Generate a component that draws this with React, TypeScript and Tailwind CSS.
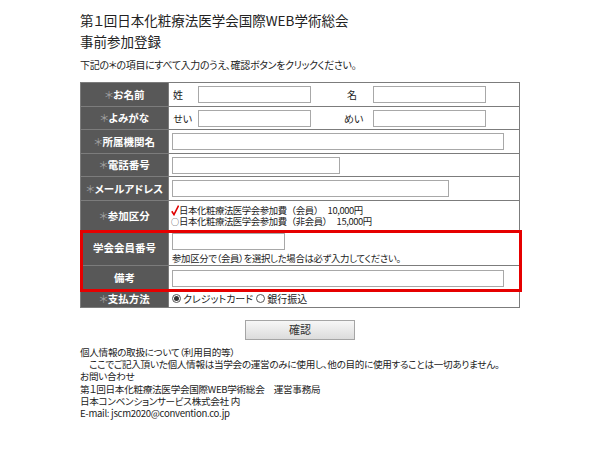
import React from "react";

const FONT = "font-['Noto_Sans_CJK_JP','Noto_Sans',sans-serif] [font-feature-settings:'palt']";

function Label({ children, req = true }: { children: React.ReactNode; req?: boolean }) {
  return (
    <th className="bg-[#585858] border border-[#7c7c7c] text-white font-bold text-[10.5px] text-center w-[88px] p-0 align-middle">
      {req && <span className="text-[#a0a0a0] font-normal">＊</span>}
      {children}
    </th>
  );
}

function Cell({ children }: { children: React.ReactNode }) {
  return <td className="border border-[#7c7c7c] bg-white pl-[3px] pr-0 py-0 align-middle text-[10px] text-[#222]">{children}</td>;
}

function Input({ w }: { w: string }) {
  return <input className={`block h-[17px] ${w} border border-[#a8a8a8] bg-white`} />;
}

function Radio({ on = false }: { on?: boolean }) {
  return (
    <span className="inline-flex items-center justify-center w-[9px] h-[9px] rounded-full border border-[#555] mr-[2px]">
      {on && <span className="w-[5px] h-[5px] rounded-full bg-[#333]" />}
    </span>
  );
}

export default function App() {
  return (
    <div className={`${FONT} w-[600px] h-[450px] bg-white text-[#222] pl-[80px] pt-[10px]`}>
      <div className="text-[13.5px] leading-[21px] text-[#222]">
        <div>第１回日本化粧療法医学会国際WEB学術総会</div>
        <div>事前参加登録</div>
      </div>
      <div className="text-[10px] leading-[14px] mt-[6px] tracking-[-0.35px] text-[#222]">下記の＊の項目にすべて入力のうえ、確認ボタンをクリックください。</div>

      <div className="relative w-[440px] mt-[10px]">
        <table className="w-[440px] border-collapse border border-[#7c7c7c]">
          <tbody>
            <tr className="h-[24px]">
              <Label>お名前</Label>
              <Cell>
                <div className="flex items-center">
                  <span className="w-[26px] pl-[1px]">姓</span>
                  <Input w="w-[113px]" />
                  <span className="w-[62px] pl-[36px]">名</span>
                  <Input w="w-[113px]" />
                </div>
              </Cell>
            </tr>
            <tr className="h-[23px]">
              <Label>よみがな</Label>
              <Cell>
                <div className="flex items-center">
                  <span className="w-[26px] pl-[1px]">せい</span>
                  <Input w="w-[113px]" />
                  <span className="w-[62px] pl-[33px]">めい</span>
                  <Input w="w-[113px]" />
                </div>
              </Cell>
            </tr>
            <tr className="h-[24px]">
              <Label>所属機関名</Label>
              <Cell>
                <Input w="w-[332px]" />
              </Cell>
            </tr>
            <tr className="h-[23px]">
              <Label>電話番号</Label>
              <Cell>
                <Input w="w-[168px]" />
              </Cell>
            </tr>
            <tr className="h-[24px]">
              <Label>メールアドレス</Label>
              <Cell>
                <Input w="w-[277px]" />
              </Cell>
            </tr>
            <tr className="h-[30px]">
              <Label>参加区分</Label>
              <Cell>
                <div className="leading-[11px] text-[9.4px] tracking-[-0.4px] -ml-[1px]">
                  <div className="flex items-center">
                    <svg width="8" height="11" viewBox="0 0 8 11">
                      <path d="M0.8 6.2 L3 9.6 L7.6 0.6" stroke="#e00000" strokeWidth="1.6" fill="none" />
                    </svg>
                    <span>日本化粧療法医学会参加費<span className="[font-feature-settings:normal]">（会員）</span></span>
                    <span className="ml-[5px]">10,000円</span>
                  </div>
                  <div className="flex items-center">
                    <span className="w-[8px] text-[8px] leading-[11px]">○</span>
                    <span>日本化粧療法医学会参加費<span className="[font-feature-settings:normal]">（非会員）</span></span>
                    <span className="ml-[5px]">15,000円</span>
                  </div>
                </div>
              </Cell>
            </tr>
            <tr className="h-[35px]">
              <Label req={false}>学会会員番号</Label>
              <Cell>
                <Input w="w-[113px]" />
                <div className="leading-[12px] mt-[2px] text-[9.4px] tracking-[-0.3px]">参加区分で（会員）を選択した場合は必ず入力してください。</div>
              </Cell>
            </tr>
            <tr className="h-[25px]">
              <Label req={false}>備考</Label>
              <Cell>
                <Input w="w-[332px]" />
              </Cell>
            </tr>
            <tr className="h-[16px]">
              <Label>支払方法</Label>
              <Cell>
                <div className="flex items-center leading-[14px]">
                  <Radio on />
                  <span>クレジットカード</span>
                  <span className="ml-[3px]" />
                  <Radio />
                  <span>銀行振込</span>
                </div>
              </Cell>
            </tr>
          </tbody>
        </table>
        <div className="absolute left-0 top-[148px] w-[442px] h-[62px] border-[3px] border-[#e60000] pointer-events-none" />
      </div>

      <div className="w-[440px] flex justify-center mt-[12px]">
        <button className="w-[110px] h-[20px] border border-[#a5a5a5] bg-gradient-to-b from-[#f7f7f7] to-[#dcdcdc] text-[11px] text-[#333] leading-none">確認</button>
      </div>

      <div className="text-[9.6px] leading-[12.3px] mt-[6px] tracking-[-0.3px] text-[#222]">
        <div>個人情報の取扱について（利用目的等）</div>
        <div>　ここでご記入頂いた個人情報は当学会の運営のみに使用し、他の目的に使用することは一切ありません。</div>
        <div>お問い合わせ</div>
        <div>第１回日本化粧療法医学会国際WEB学術総会　運営事務局</div>
        <div>日本コンベンションサービス株式会社 内</div>
        <div>E-mail: jscm2020@convention.co.jp</div>
      </div>
    </div>
  );
}
